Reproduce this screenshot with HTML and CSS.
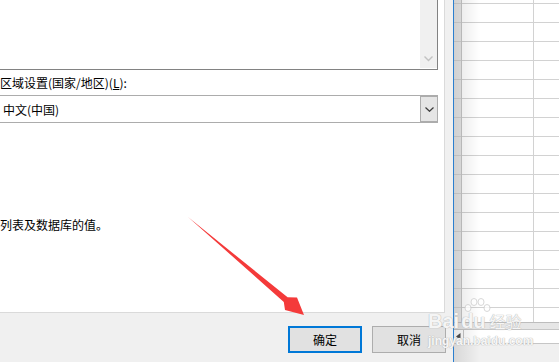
FILE: index.html
```html
<!DOCTYPE html>
<html lang="zh-CN">
<head>
    <meta charset="UTF-8">
    <title>区域设置</title>
    <link rel="stylesheet" href="styles.css">
</head>
<body>
    <div class="screen">
        <div class="dialog">
            <div class="panel">
                <!-- list box (top part is scrolled out of view) -->
                <div class="listbox">
                    <div class="vscroll">
                        <svg width="9" height="6" viewBox="0 0 9 6"><path d="M0.5 0.5 L4.5 4.5 L8.5 0.5" fill="none" stroke="#c2c2c2" stroke-width="1.4"/></svg>
                    </div>
                </div>

                <label class="field-label">区域设置(国家/地区)(<u>L</u>):</label>
                <div class="combo">
                    <span class="combo-text">中文(中国)</span>
                    <div class="combo-btn">
                        <svg width="9" height="5" viewBox="0 0 9 5"><path d="M0.5 0.5 L4.5 4.3 L8.5 0.5" fill="none" stroke="#3c3c3c" stroke-width="1.2"/></svg>
                    </div>
                </div>

                <p class="note">列表及数据库的值。</p>
            </div>

            <div class="buttons">
                <button class="btn btn-default">确定</button>
                <button class="btn">取消</button>
            </div>
        </div>

        <div class="frame-edge"></div>

        <!-- spreadsheet behind the dialog -->
        <div class="sheet">
            <div class="grid">
                <div class="row-heads"></div>
                <div class="col col-a"></div>
                <div class="col col-b"></div>
            </div>
            <div class="hscroll"></div>
            <div class="tabs">
                <span class="tab-arrow">
                    <svg width="5" height="7" viewBox="0 0 5 7"><path d="M4.5 0 L0 3.5 L4.5 7 Z" fill="#505050"/></svg>
                </span>
            </div>
            <div class="status"></div>
        </div>

        <!-- red pointer arrow drawn on top of the screenshot -->
        <svg class="arrow" width="559" height="362" viewBox="0 0 559 362">
            <polygon points="188,217 287.6,297.3 297,297.5 304,315 285,310 283.8,301.9" fill="#f43a3a"/>
        </svg>

        <div class="watermark">
            <svg class="paw" width="30" height="20" viewBox="0 0 30 20">
                <g fill="#fff" stroke="#cfcfcf" stroke-width="1">
                    <ellipse cx="6" cy="11" rx="3" ry="3.5"/>
                    <ellipse cx="12" cy="5" rx="3" ry="3.5"/>
                    <ellipse cx="19" cy="5" rx="3" ry="3.5"/>
                    <ellipse cx="25" cy="11" rx="3" ry="3.5"/>
                </g>
            </svg>
            <div class="wm-logo">Bai<span class="wm-du">du</span><span class="wm-cn">经验</span></div>
            <div class="wm-url">jingyan.baidu.com</div>
        </div>
    </div>
</body>
</html>
```

FILE: styles.css
```css
body {
    margin: 0;
    font-family: "Noto Sans CJK SC", "Microsoft YaHei", sans-serif;
    font-size: 12px;
    color: #000;
}
.screen {
    position: relative;
    display: flex;
    width: 559px;
    height: 362px;
    overflow: hidden;
    background: #fff;
}

/* dialog */
.dialog {
    width: 453px;
    flex-shrink: 0;
    background: #f0f0f0;
    display: flex;
    flex-direction: column;
}
.panel {
    width: 444px;
    height: 312px;
    background: #fff;
    border-right: 1px solid #dadada;
    border-bottom: 1px solid #dadada;
}
.listbox {
    box-sizing: border-box;
    width: 440px;
    height: 71px;
    margin: -1px 0 0 -2px;
    border: 1px solid #828282;
    display: flex;
    justify-content: flex-end;
}
.vscroll {
    width: 17px;
    background: #f0f0f0;
    margin-bottom: 1px;
    display: flex;
    flex-direction: column;
    justify-content: flex-end;
    align-items: center;
    padding-bottom: 6px;
    box-sizing: border-box;
}
.field-label {
    display: block;
    margin-top: 5px;
    line-height: 16px;
}
.combo {
    box-sizing: border-box;
    width: 440px;
    height: 28px;
    margin: 4px 0 0 -2px;
    border: 1px solid #acacac;
    display: flex;
    align-items: center;
}
.combo-text {
    flex: 1;
    padding-left: 4px;
}
.combo-btn {
    box-sizing: border-box;
    width: 17px;
    height: 100%;
    background: #e5e5e5;
    border: 1px solid #acacac;
    border-right: none;
    display: flex;
    align-items: center;
    justify-content: center;
}
.note {
    margin: 94px 0 0;
    line-height: 16px;
}

.buttons {
    display: flex;
    gap: 10px;
    padding: 13px 0 0 288px;
}
.btn {
    box-sizing: border-box;
    width: 74px;
    height: 27px;
    padding: 0;
    background: #e1e1e1;
    border: 1px solid #adadad;
    font-family: inherit;
    font-size: 12px;
    color: #000;
}
.btn-default {
    border: 2px solid #0078d7;
}

.frame-edge {
    width: 1px;
    flex-shrink: 0;
    background: #2b7fcf;
}

/* sheet */
.sheet {
    position: relative;
    flex: 1;
    display: flex;
    flex-direction: column;
}
.sheet::after {
    content: "";
    position: absolute;
    left: 0;
    top: 0;
    bottom: 0;
    width: 26px;
    background: linear-gradient(to right, rgba(0, 0, 0, 0.1), rgba(0, 0, 0, 0));
}
.grid {
    height: 322px;
    display: flex;
}
.row-heads, .col {
    background-image: linear-gradient(#d2d2d2 1px, transparent 1px);
    background-size: 100% 19px;
    background-position: 0 3px;
}
.row-heads {
    width: 7px;
    background-color: #e8e8e8;
    border-right: 1px solid #c6c6c6;
}
.col-a {
    width: 71px;
    border-right: 1px solid #d2d2d2;
}
.col-b {
    flex: 1;
}
.hscroll {
    height: 6px;
    background: #e6e6e6;
    border-top: 1px solid #bdbdbd;
    border-bottom: 1px solid #c6c6c6;
}
.tabs {
    height: 13px;
    background: #fff;
    border-bottom: 1px solid #c6c6c6;
}
.tab-arrow {
    box-sizing: border-box;
    width: 10px;
    height: 13px;
    border-right: 1px solid #c6c6c6;
    display: flex;
    align-items: center;
    justify-content: center;
}
.status {
    flex: 1;
    background: #f0f0f0;
}

.arrow {
    position: absolute;
    left: 0;
    top: 0;
}

/* baidu watermark */
.watermark {
    position: absolute;
    left: 428px;
    top: 296px;
    width: 110px;
    color: rgba(255, 255, 255, 0.9);
    text-shadow: 0 0 1px #b5b5b5, 0 0 1px #b5b5b5;
}
.paw {
    position: absolute;
    left: 34px;
    top: 1px;
    opacity: 0.8;
}
.wm-logo {
    margin-top: 15px;
    font-family: "Liberation Sans", Arial, sans-serif;
    font-weight: bold;
    font-size: 20px;
    line-height: 20px;
}
.wm-du {
    margin-left: 2px;
}
.wm-cn {
    margin-left: 4px;
    font-family: "Noto Sans CJK SC", sans-serif;
    font-size: 16px;
    font-weight: normal;
}
.wm-url {
    margin-top: 4px;
    font-family: "Liberation Sans", Arial, sans-serif;
    font-weight: bold;
    font-size: 12px;
    line-height: 12px;
}
```
